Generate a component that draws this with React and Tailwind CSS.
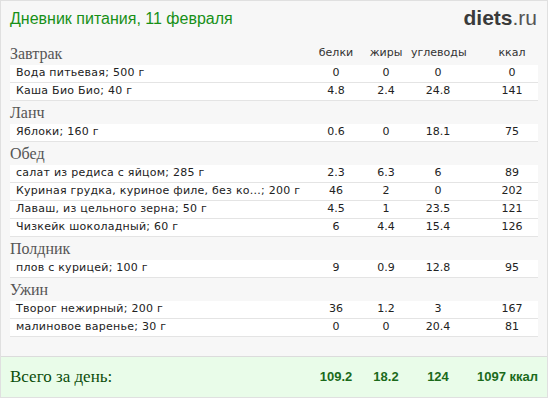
const sections = [
  {
    title: 'Завтрак',
    rows: [
      ['Вода питьевая; 500 г', '0', '0', '0', '0'],
      ['Каша Био Био; 40 г', '4.8', '2.4', '24.8', '141'],
    ],
  },
  { title: 'Ланч', rows: [['Яблоки; 160 г', '0.6', '0', '18.1', '75']] },
  {
    title: 'Обед',
    rows: [
      ['салат из редиса с яйцом; 285 г', '2.3', '6.3', '6', '89'],
      ['Куриная грудка, куриное филе, без ко...; 200 г', '46', '2', '0', '202'],
      ['Лаваш, из цельного зерна; 50 г', '4.5', '1', '23.5', '121'],
      ['Чизкейк шоколадный; 60 г', '6', '4.4', '15.4', '126'],
    ],
  },
  { title: 'Полдник', rows: [['плов с курицей; 100 г', '9', '0.9', '12.8', '95']] },
  {
    title: 'Ужин',
    rows: [
      ['Творог нежирный; 200 г', '36', '1.2', '3', '167'],
      ['малиновое варенье; 30 г', '0', '0', '20.4', '81'],
    ],
  },
];

const serif = { fontFamily: '"Liberation Serif", "Times New Roman", serif' };
const arial = { fontFamily: '"Liberation Sans", Arial, sans-serif' };

function Row({ r }) {
  return (
    <div className="flex h-[18px] items-center bg-white border-b border-[#e4e4e4] text-[11px] text-[#222]">
      <div className="flex-1 pl-[6px] whitespace-nowrap overflow-hidden tracking-[0.25px]">{r[0]}</div>
      <div className="w-[50px] text-center">{r[1]}</div>
      <div className="w-[50px] text-center">{r[2]}</div>
      <div className="w-[54px] text-center">{r[3]}</div>
      <div className="w-[21px]" />
      <div className="w-[52px] text-center">{r[4]}</div>
    </div>
  );
}

export default function App() {
  return (
    <div className="w-[550px] h-[398px] bg-white" style={{ fontFamily: '"DejaVu Sans", Verdana, sans-serif' }}>
      <div className="w-[548px] h-[398px] border border-[#e0e0e0] bg-[#f7f7f7] flex flex-col">
        {/* Шапка */}
        <div className="h-[41px] flex items-start justify-between px-[9px] pt-[6px]">
          <div className="text-[16px] text-[#179017]" style={arial}>
            Дневник питания, 11 февраля
          </div>
          <div className="text-[21px] text-[#3a3a3a] leading-[22px] mr-[1px]" style={arial}>
            <span className="font-bold">diets</span><span className="text-[#555]">.ru</span>
          </div>
        </div>

        {/* Таблица */}
        <div className="px-[9px] flex-1">
          {sections.map((s, i) => (
            <div key={s.title}>
              <div className="h-[23px] flex items-end pb-[2px]">
                <div className="flex-1 text-[16px] text-[#555] leading-[18px]" style={serif}>{s.title}</div>
                {i === 0 && (
                  <div className="flex text-[11px] text-[#333] pb-[2px]">
                    <div className="w-[50px] text-center">белки</div>
                    <div className="w-[50px] text-center">жиры</div>
                    <div className="w-[54px] text-center">углеводы</div>
                    <div className="w-[21px]" />
                    <div className="w-[52px] text-center">ккал</div>
                  </div>
                )}
              </div>
              {s.rows.map((r) => (
                <Row key={r[0]} r={r} />
              ))}
            </div>
          ))}
        </div>

        {/* Итого */}
        <div className="h-[41px] border-t border-[#dcdcdc] bg-[#e9fce9] flex items-center px-[9px]">
          <div className="flex-1 text-[17px] text-[#0b4d0b]" style={serif}>Всего за день:</div>
          <div className="flex text-[13px] font-bold text-[#1b6a1b]" style={arial}>
            <div className="w-[50px] text-center">109.2</div>
            <div className="w-[50px] text-center">18.2</div>
            <div className="w-[54px] text-center">124</div>
            <div className="w-[73px] text-right">1097 ккал</div>
          </div>
        </div>
      </div>
    </div>
  );
}
